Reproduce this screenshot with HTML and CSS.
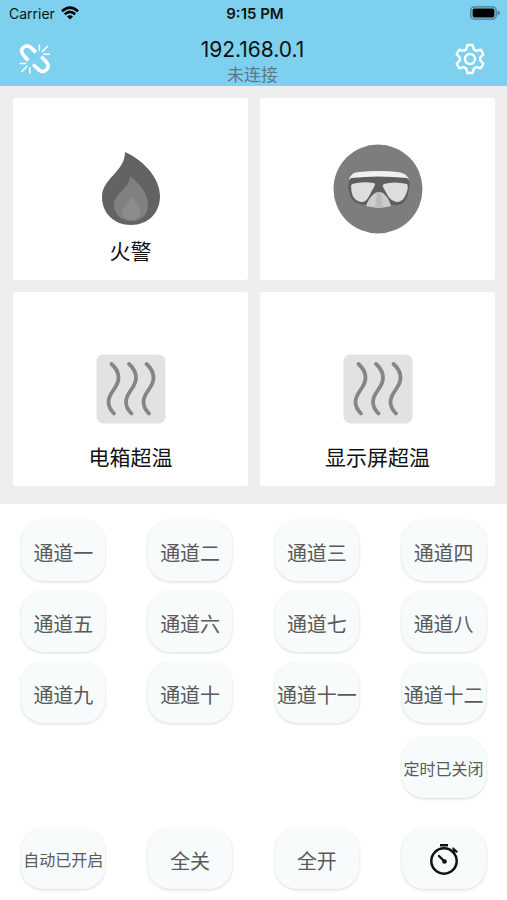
FILE: index.html
```html
<!DOCTYPE html>
<html lang="zh-CN">
<head>
<meta charset="utf-8">
<meta name="viewport" content="width=device-width, initial-scale=1">
<title>192.168.0.1</title>
<link rel="stylesheet" href="styles.css">
</head>
<body>
<header class="top">
  <div class="status">
    <span class="carrier">Carrier
      <svg width="18" height="14" viewBox="0 0 18 14" aria-hidden="true"><g fill="none" stroke="#000" stroke-width="2.5"><path d="M1 5.2Q9-2 17 5.2"/><path d="M3.8 8.2Q9 3.6 14.2 8.2"/></g><path d="M6 10.4Q9 8 12 10.4L9 13.6Z"/></svg>
    </span>
    <span class="clock">9:15 PM</span>
    <span class="battery">
      <svg width="31" height="14" viewBox="0 0 31 14" aria-hidden="true"><rect x=".8" y=".8" width="25.4" height="12.4" rx="3.6" fill="none" stroke="#44788c" stroke-width="1.3"/><rect x="2.6" y="2.4" width="21.8" height="9.2" rx="1.8"/><path d="M27.7 4.7Q30 5.4 30 7T27.700 9.300Z" fill="#44788c"/></svg>
    </span>
  </div>
  <div class="bar">
    <button class="icon-btn" type="button" aria-label="连接">
      <svg width="32" height="32" viewBox="0 0 32 32" aria-hidden="true"><g fill="none" stroke="#fff" stroke-linecap="round"><path stroke-width="3.600" stroke-linecap="butt" d="M9.200 17.500 4 11.500Q1.200 7.800 4 4.800Q7.500 1.200 11.200 4L17 9.400"/><path stroke-width="3.600" stroke-linecap="butt" d="M22.200 13.600 28 19.700Q30.500 23.200 27.700 26.500Q24 30 20.500 27.300L14 21.500"/><path stroke-width="1.500" d="M20.400 2v5.500M28.500 3.200 23.300 8.800M30.500 11.300H25M10.800 30.200v-5.500M3 28.500 8 23M1.200 20.600H6.500"/></g></svg>
    </button>
    <div class="heading">
      <h1>192.168.0.1</h1>
      <p>未连接</p>
    </div>
    <button class="icon-btn" type="button" aria-label="设置">
      <svg width="32" height="32" viewBox="-16 -16 32 32" aria-hidden="true"><g fill="none" stroke="#fff" stroke-width="2.400" stroke-linejoin="round"><path d="M-2.600-14H2.600L3.800-9.600 6.400-8.100 10.800-9.250 13.400-4.750 10.200-1.500V1.500L13.400 4.750 10.800 9.250 6.400 8.100 3.800 9.600 2.600 14H-2.600L-3.800 9.600-6.400 8.100-10.800 9.250-13.400 4.750-10.200 1.500V-1.500L-13.400-4.750-10.800-9.250-6.400-8.100-3.800-9.600Z"/><circle r="5"/></g></svg>
    </button>
  </div>
</header>
<main>
  <section class="alarms">
    <article class="card">
      <svg class="fire" width="58" height="74" viewBox="0 0 58 74" aria-hidden="true"><path fill="#636363" d="M23 0C43 9 58 27 58 44C58 61 46 73 29 73S0 61 0 45C0 26 23 20 23 0Z"/><path fill="#808080" d="M28 24C37 31 46 42 46 52C46 63 39 69 29 69S12 62 12 53C12 41 28 37 28 24Z"/><path fill="#8c8c8c" d="M29 44C34 49 38 54 38 59C38 65 34 68 29 68S20 64 20 60C20 54 29 51 29 44Z"/></svg>
      <h2>火警</h2>
    </article>
    <article class="card">
      <svg class="mask" width="90" height="90" viewBox="0 0 90 90" aria-hidden="true"><circle cx="45" cy="45" r="44.500" fill="#7d7d7d"/><path fill="#f1f1f1" d="M16 36Q18 28 26 28Q45 26 65 28Q74 29 76 36Q46 31 16 36Z"/><path fill="#5f5f5f" d="M18 34Q45 31 74 34Q78 37 76 45Q74 60 65 61Q56 62 50 55L45 48 40 56Q35 63 27 60Q18 58 16 48Q14 37 18 34Z"/><path fill="#dedede" d="M19 40Q29 37 41 39Q43 40 41 43L35 54Q31 60 25 57Q18 54 18 42ZM51 40Q61 37 74 40Q76 43 73 50Q70 58 64 58Q58 57 55 52L50 43Q49 41 51 40Z"/><path fill="#ccc" d="M33 62Q36 53 42 49Q46 47 50 49Q56 54 58 62Q46 65 33 62Z"/><path fill="#bcbcbc" d="M44 48H48L50 64H42Z"/></svg>
    </article>
    <article class="card tall">
      <svg width="70" height="70" viewBox="0 0 70 70" aria-hidden="true"><rect x=".5" y=".5" width="69" height="69" rx="7" fill="#e2e2e2"/><g fill="none" stroke="#858585" stroke-width="3.800" stroke-linecap="round"><path id="wave" d="M15.500 10Q22.500 16 22.500 24C22.500 34 12.500 38 12.500 48Q12.500 54 18 59.500"/><use href="#wave" x="17.500"/><use href="#wave" x="35"/></g></svg>
      <h2>电箱超温</h2>
    </article>
    <article class="card tall">
      <svg width="70" height="70" viewBox="0 0 70 70" aria-hidden="true"><rect x=".5" y=".5" width="69" height="69" rx="7" fill="#e2e2e2"/><g fill="none" stroke="#858585" stroke-width="3.800" stroke-linecap="round"><use href="#wave"/><use href="#wave" x="17.500"/><use href="#wave" x="35"/></g></svg>
      <h2>显示屏超温</h2>
    </article>
  </section>
  <section class="controls">
    <div class="keys">
      <button type="button" class="key">通道一</button>
      <button type="button" class="key">通道二</button>
      <button type="button" class="key">通道三</button>
      <button type="button" class="key">通道四</button>
      <button type="button" class="key">通道五</button>
      <button type="button" class="key">通道六</button>
      <button type="button" class="key">通道七</button>
      <button type="button" class="key">通道八</button>
      <button type="button" class="key">通道九</button>
      <button type="button" class="key">通道十</button>
      <button type="button" class="key">通道十一</button>
      <button type="button" class="key">通道十二</button>
    </div>
    <div class="keys timer">
      <button type="button" class="key small last">定时已关闭</button>
    </div>
    <div class="keys master">
      <button type="button" class="key small">自动已开启</button>
      <button type="button" class="key">全关</button>
      <button type="button" class="key">全开</button>
      <button type="button" class="key small" aria-label="定时">
        <svg width="30" height="32" viewBox="0 0 30 32" aria-hidden="true"><circle cx="15" cy="18" r="12.700" fill="none" stroke="#111" stroke-width="2.500"/><path fill="#111" d="M11 1h8v2.600h-8ZM24 4l5 4.500-1.600 1.400-1.200-.8-1.500 1.500-2-1.800 1.500-1.600-1-1.400Z"/><path stroke="#111" stroke-width="2.400" stroke-linecap="round" d="m10 13 5 5"/><circle cx="15.500" cy="18.500" r="2.300" fill="#111"/></svg>
      </button>
    </div>
  </section>
</main>
</body>
</html>
```
FILE: styles.css
```css
* {
  box-sizing: border-box;
}

body {
  margin: 0;
  background: #fff;
  color: #111;
  font-family: Inter, "Noto Sans CJK SC", sans-serif;
}

button {
  padding: 0;
  border: 0;
  background: none;
  font-family: inherit;
  cursor: pointer;
}

svg {
  display: block;
}

h1,
h2,
p {
  margin: 0;
  font-weight: 400;
}

.top {
  background: #7dd1ef;
}

.status {
  display: grid;
  grid-template-columns: 1fr auto 1fr;
  align-items: center;
  height: 26px;
  padding: 0 6px 0 9px;
  font-size: 14px;
}

.carrier {
  display: flex;
  align-items: center;
  gap: 6px;
}

.clock {
  font-size: 15px;
  font-weight: 600;
}

.battery {
  justify-self: end;
}

.bar {
  display: flex;
  align-items: center;
  justify-content: space-between;
  height: 60px;
  padding: 0 21px 0 19px;
}

.icon-btn {
  padding-top: 6px;
}

.heading {
  padding-top: 12px;
  text-align: center;
}

.heading h1 {
  font-size: 21px;
  line-height: 26px;
}

.heading p {
  color: #5c7883;
  font-size: 17px;
  line-height: 24px;
}

.alarms {
  display: grid;
  grid-template-columns: 1fr 1fr;
  gap: 12px;
  padding: 12px 12px 18px 13px;
  background: #eee;
}

.card {
  display: flex;
  flex-direction: column;
  align-items: center;
  justify-content: flex-end;
  gap: 10px;
  height: 182px;
  padding-bottom: 12px;
  border-radius: 3px;
  background: #fff;
}

.card:has(.mask) {
  justify-content: center;
  padding: 0;
}

.tall {
  gap: 18px;
  height: 194px;
}

.card h2 {
  font-size: 21px;
  line-height: 32px;
}

.controls {
  padding: 16px 0 12px;
}

.keys {
  display: grid;
  grid-template-columns: repeat(4, 1fr);
  justify-items: center;
  gap: 10px 0;
}

.timer {
  margin-top: 14px;
}

.master {
  margin-top: 30px;
}

.last {
  grid-column: 4;
}

.key {
  display: flex;
  align-items: center;
  justify-content: center;
  width: 84px;
  height: 61px;
  padding-top: 4px;
  border-radius: 22px;
  background: #f7fbfc;
  box-shadow: 0 1px 3px #00000026;
  color: #5a5a5a;
  font-size: 20px;
  white-space: nowrap;
}

.small {
  padding-top: 1px;
  font-size: 16px;
}
```
